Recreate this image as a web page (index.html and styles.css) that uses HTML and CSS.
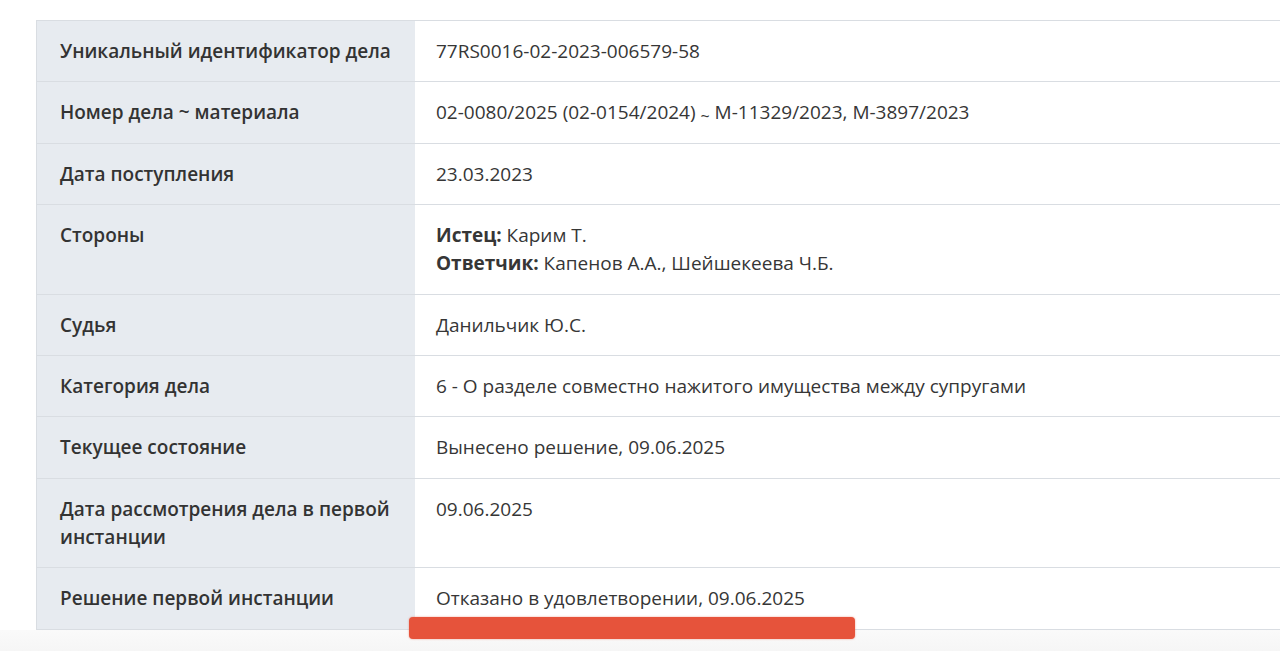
FILE: index.html
```html
<!DOCTYPE html>
<html lang="ru">
<head>
<meta charset="utf-8">
<link rel="stylesheet" href="styles.css">
</head>
<body>
<div class="page">
  <table class="case">
    <tr><th>Уникальный идентификатор дела</th><td>77RS0016-02-2023-006579-58</td></tr>
    <tr><th>Номер дела ~ материала</th><td>02-0080/2025 (02-0154/2024) <span class="tilde">~</span> М-11329/2023, М-3897/2023</td></tr>
    <tr><th>Дата поступления</th><td>23.03.2023</td></tr>
    <tr><th>Стороны</th><td><b>Истец:</b> Карим Т.<br><b>Ответчик:</b> Капенов А.А., Шейшекеева Ч.Б.</td></tr>
    <tr><th>Судья</th><td>Данильчик Ю.С.</td></tr>
    <tr><th>Категория дела</th><td>6 - О разделе совместно нажитого имущества между супругами</td></tr>
    <tr><th>Текущее состояние</th><td>Вынесено решение, 09.06.2025</td></tr>
    <tr><th>Дата рассмотрения дела в первой инстанции</th><td>09.06.2025</td></tr>
    <tr><th>Решение первой инстанции</th><td class="last">Отказано в удовлетворении, 09.06.2025<span class="mark"></span></td></tr>
  </table>
  <div class="footer-fade"></div>
</div>
</body>
</html>
```
FILE: styles.css
```css
html, body {
  margin: 0;
  padding: 0;
  background: #ffffff;
  overflow: hidden;
}
.page {
  width: 1280px;
  height: 651px;
  overflow: hidden;
  padding-top: 20px;
  box-sizing: border-box;
  font-family: "Open Sans", "Liberation Sans", sans-serif;
  color: #363636;
}
.case {
  border-collapse: collapse;
  margin-left: 36px;
  width: 1300px;
  font-size: 19px;
  line-height: 28px;
  border-top: 1px solid #d9dde2;
  border-left: 1px solid #d9dde2;
}
.case th, .case td {
  text-align: left;
  vertical-align: top;
  padding: 16px 21px 16.4px;
  border-bottom: 1px solid #d9dde2;
}
.case th {
  width: 334px;
  background: #e7ebf0;
  font-weight: 600;
  padding-left: 23px;
  padding-right: 21px;
  color: #333333;
}
.case td {
  font-weight: 400;
  background: #ffffff;
}
.case td b {
  font-weight: 700;
}
.tilde {
  font-size: 16px;
  line-height: 0;
  position: relative;
  top: 3px;
}
.last {
  position: relative;
}
.mark {
  position: absolute;
  left: -6px;
  top: 49px;
  width: 446px;
  height: 22px;
  background: #e6533b;
  border-radius: 4px;
  box-shadow: 0 0 2px rgba(230, 83, 59, 0.6);
}
.footer-fade {
  height: 30px;
  background: linear-gradient(#fafafa, #f4f4f4);
}
```
